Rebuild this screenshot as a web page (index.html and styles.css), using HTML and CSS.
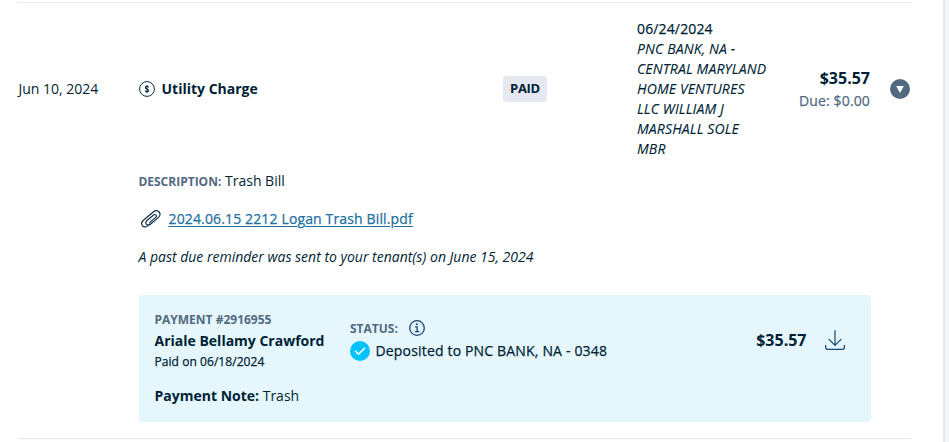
FILE: index.html
```html
<!DOCTYPE html>
<html lang="en">
<head>
<meta charset="utf-8">
<title>Charges</title>
<link rel="stylesheet" href="styles.css">
</head>
<body>
<main class="panel">
  <article class="charge">
    <header class="summary">
      <div class="date">Jun 10, 2024</div>
      <div class="category">
        <svg class="coin" width="16" height="16" viewBox="0 0 16 16" fill="none" stroke="#0b2a45"><circle cx="8" cy="8" r="7.4" stroke-width="1"/><path d="M9.7 6.3C9.5 5.5 8.9 5.2 8 5.2c-1 0-1.7.4-1.7 1.2 0 1.9 3.4 1.2 3.4 3.1 0 .8-.7 1.3-1.7 1.3s-1.6-.4-1.8-1.2M8 4v8" stroke-width="1.1"/></svg>
        <span>Utility Charge</span>
      </div>
      <div><span class="badge">PAID</span></div>
      <div class="deposit medium">06/24/2024<br><em>PNC BANK, NA - CENTRAL MARYLAND HOME VENTURES LLC WILLIAM J MARSHALL SOLE MBR</em></div>
      <div class="amounts"><div class="amount">$35.57</div><div class="due medium">Due: $0.00</div></div>
      <svg class="toggle" width="20" height="20" viewBox="0 0 20 20"><circle cx="10" cy="10" r="10" fill="#526a80"/><path d="M6.2 7h7.6L10 14z" fill="#fff"/></svg>
    </header>
    <section class="details">
      <p class="description"><span class="label">DESCRIPTION:</span> Trash Bill</p>
      <div class="attachment">
        <svg width="20" height="18" viewBox="0 0 20 18" fill="none" stroke="#0b2a45" stroke-width="1.15" stroke-linecap="round" stroke-linejoin="round"><path d="M2.4 10.2L12.6 1.7c1.8-1.4 4.1-1.2 5.5.3 1.5 1.7 1.2 3.9-.6 5.4l-8.2 6.9c-1.3 1.1-2.9 1-3.9-.1-1-1.2-.7-2.6.6-3.7l6.6-5.5c.8-.7 1.8-.7 2.4 0 .7.8.5 1.7-.3 2.4L8.5 12.6M2.4 10.2C.4 11.9.2 14 1.4 15.6c1.3 1.6 3.4 1.6 5.1.3l2-1.6"/></svg>
        <a class="medium" href="#">2024.06.15 2212 Logan Trash Bill.pdf</a>
      </div>
      <p class="reminder">A past due reminder was sent to your tenant(s) on June 15, 2024</p>
      <div class="payment">
        <div class="payer">
          <div class="label">PAYMENT #2916955</div>
          <div class="name">Ariale Bellamy Crawford</div>
          <div class="paid-on medium">Paid on 06/18/2024</div>
        </div>
        <div class="status">
          <div class="status-title"><span class="label">STATUS:</span>
            <svg width="16" height="16" viewBox="0 0 16 16" fill="none" stroke="#174775"><circle cx="8" cy="8" r="7.3" stroke-width="1.3"/><path d="M6.1 6.8h2v4.7M5.9 11.7h4.4" stroke-width="1.3"/><circle cx="7.8" cy="4.2" r="1" fill="#174775" stroke="none"/></svg>
          </div>
          <div class="status-value medium">
            <svg width="20" height="20" viewBox="0 0 20 20"><circle cx="10" cy="10" r="10" fill="#00c2ff"/><path d="M5.5 10.2l3 3 6-6" fill="none" stroke="#fff" stroke-width="1.6" stroke-linecap="round" stroke-linejoin="round"/></svg>
            <span>Deposited to PNC BANK, NA - 0348</span>
          </div>
        </div>
        <div class="amount">$35.57</div>
        <svg class="download" width="20" height="20" viewBox="0 0 20 20" fill="none" stroke="#174775" stroke-width="1.2" stroke-linecap="round" stroke-linejoin="round"><path d="M10 .6v14.6M4 9.3l6 6 6-6M.6 15.3v1.8c0 1.6.6 2.3 2.1 2.3h14.6c1.5 0 2.1-.7 2.1-2.3v-1.8"/></svg>
        <div class="note"><b>Payment Note:</b> Trash</div>
      </div>
    </section>
  </article>
</main>
</body>
</html>
```
FILE: styles.css
```css
* { box-sizing: border-box; }
body {
  margin: 0;
  background: #f5f6fa;
  color: #001f36;
  font: 14px/20px "Open Sans", sans-serif;
  overflow: hidden;
}
p { margin: 0; }
svg { display: block; flex: none; }
.medium {
  font-weight: 500;
  letter-spacing: .14px;
  -webkit-text-stroke: .25px currentColor;
}
.medium em { -webkit-text-stroke-width: .12px; }
.panel {
  width: 945px;
  height: 442px;
  padding: 2px 32px 0 18px;
  background: #fff;
  border-right: 2px solid #e5e8f1;
}
.charge {
  width: 893px;
  height: 437px;
  border: solid #e5e8f1;
  border-width: 1px 0;
}
.summary {
  display: grid;
  grid-template-columns: 121px 364px 134px 131px 102px 40px;
  align-items: center;
  padding-top: 16px;
}
.date { padding-left: .5px; }
.category { display: flex; align-items: center; gap: 6.5px; font-weight: 700; }
.badge {
  display: block;
  width: 44px;
  height: 26px;
  border-radius: 4px;
  background: #e5e8f1;
  font-weight: 700;
  font-size: 13px;
  letter-spacing: -.3px;
  line-height: 25px;
  text-align: center;
}
.amounts { text-align: right; }
.amount { font-size: 16px; font-weight: 700; line-height: 24px; }
.due { color: #526a80; line-height: 22px; }
.toggle { justify-self: end; }
.details { width: 732px; margin: 12px 0 0 121px; }
.description, .reminder { margin-left: -.6px; }
.label { color: #526a80; font-size: 12px; font-weight: 700; }
.attachment { display: flex; align-items: center; gap: 7.5px; padding-left: 2px; margin: 17px 0 18px; }
.attachment a { color: #21709f; text-underline-offset: 2px; }
.reminder { font-style: italic; }
.payment {
  display: grid;
  grid-template-columns: 195.5px 1fr auto 38px;
  align-items: center;
  height: 127px;
  margin-top: 28px;
  padding: 15px 26px 15px 15.5px;
  align-content: start;
  border-radius: 4px;
  background: #e5f7fc;
}
.payer .label { padding-bottom: 1px; line-height: 20px; }
.name { font-weight: 700; line-height: 20px; }
.paid-on { font-size: 12px; line-height: 21px; letter-spacing: .06px; }
.status { margin-top: -3px; }
.status-title { display: flex; align-items: center; gap: 11px; height: 20px; }
.status-title .label { padding-top: 1px; }
.status-value { display: flex; align-items: center; gap: 5.5px; margin-top: 3px; letter-spacing: .17px; }
.payment .amount { margin: -2px .5px 0 0; }
.download { justify-self: end; margin-top: -2px; }
.note { grid-column: 1 / -1; margin-top: 14px; }
```
